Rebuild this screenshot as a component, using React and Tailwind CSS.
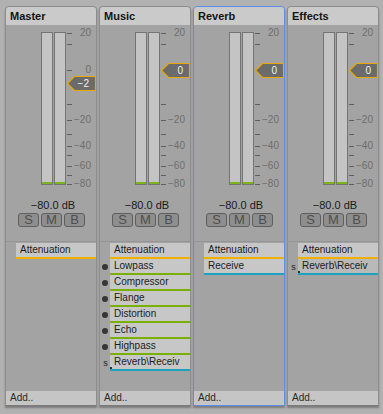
import React from 'react';

const ticks = [
  { t: 'top-[8px]' },
  { t: 'top-[19px]' },
  { t: 'top-[45px]' },
  { t: 'top-[79px]' },
  { t: 'top-[95px]' },
  { t: 'top-[109px]' },
  { t: 'top-[121px]' },
  { t: 'top-[130px]' },
  { t: 'top-[141px]' },
  { t: 'top-[150px]' },
  { t: 'top-[159px]' },
];

const labels = [
  { text: '20', t: 'top-[2px]' },
  { text: '0', t: 'top-[39px]', zero: true },
  { text: '\u221220', t: 'top-[89px]' },
  { text: '\u221240', t: 'top-[115px]' },
  { text: '\u221260', t: 'top-[135px]' },
  { text: '\u221280', t: 'top-[153px]' },
];

const lineColor = {
  orange: 'border-[#f0b000]',
  green: 'border-[#7ab000]',
  cyan: 'border-[#1ca3bf]',
};

function Meter({ left }) {
  return (
    <div className={`absolute ${left} top-[7px] w-[12px] h-[153px] border border-[#747474] bg-[#c4c4c4] flex flex-col justify-end`}>
      <div className="h-[2px] bg-[#7cb41c]" />
    </div>
  );
}

function Marker({ text, top }) {
  return (
    <div className={`absolute left-[61px] ${top} w-[30px] h-[15px]`}>
      <svg width="30" height="15" viewBox="0 0 30 15" className="absolute inset-0 overflow-visible">
        <polygon points="0.5,7.5 7.5,0.5 28.5,0.5 28.5,14.5 7.5,14.5" fill="#6b6b6b" stroke="#e8a800" strokeWidth="1.2" />
      </svg>
      <span className="absolute right-[8px] top-0 text-[10px] leading-[15px] text-[#f2f2f2]">{text}</span>
    </div>
  );
}

function Row({ row }) {
  return (
    <div className="flex h-[16px]">
      <div className="w-[10px] flex items-center justify-center">
        {row.dot && <div className="w-[6px] h-[6px] rounded-full bg-[#363636]" />}
        {row.send && <span className="text-[9px] leading-[14px] text-[#222] pl-[1px]">s</span>}
      </div>
      <div className={`relative flex-1 ${row.send && row.dark ? 'bg-[#b9b9b9]' : 'bg-[#c7c7c7]'} border-b-2 ${lineColor[row.color]} text-[10px] leading-[14px] text-[#1c1c1c] pl-[4px] whitespace-nowrap overflow-hidden`}>
        {row.name}
        {row.send && <div className="absolute left-0 bottom-[-2px] w-[2px] h-[4px] bg-[#0d3c48]" />}
      </div>
    </div>
  );
}

function Panel({ name, selected, marker, markerTop, hideZero, rows }) {
  return (
    <div
      className={`w-[92px] h-[400px] shrink-0 flex flex-col rounded-t-[4px] overflow-hidden bg-[#a3a3a3] border shadow-[0_2px_2px_rgba(0,0,0,0.3)] ${
        selected ? 'border-[#5b8ee8]' : 'border-[#8d8d8d] border-b-[#7a7a7a]'
      }`}
    >
      <div className="h-[18px] bg-[#cacaca] text-[11px] font-bold leading-[18px] text-[#141414] pl-[4px]">{name}</div>
      <div className="relative h-[161px]">
        <Meter left="left-[35px]" />
        <Meter left="left-[48px]" />
        {ticks.map((k, i) => (
          <div key={i} className={`absolute left-[61px] ${k.t} w-[5px] h-[1px] bg-[#5f5f5f]`} />
        ))}
        {labels.map((l, i) =>
          l.zero && hideZero ? null : (
            <div key={i} className={`absolute right-[5px] ${l.t} text-[10px] leading-[12px] text-[#6e6e6e]`}>
              {l.text}
            </div>
          )
        )}
        <Marker text={marker} top={markerTop} />
      </div>
      <div className="h-[12px]" />
      <div className="h-[14px] text-[11px] leading-[14px] text-[#1a1a1a] text-center pl-[4px]">{'\u221280.0 dB'}</div>
      <div className="h-[1px]" />
      <div className="h-[14px] flex justify-center gap-[2px] pl-[1px]">
        {['S', 'M', 'B'].map((b) => (
          <div
            key={b}
            className="w-[21px] h-[14px] rounded-[3px] border border-[#5e5e5e] bg-[#8e8e8e] text-[13px] leading-[12px] text-[#4e4e4e] flex items-center justify-center"
          >
            {b}
          </div>
        ))}
      </div>
      <div className="h-[14px]" />
      <div className="h-[1px] bg-[#959595]" />
      <div className="flex-1 pt-[1px] flex flex-col">
        {rows.map((r, i) => (
          <Row key={i} row={r} />
        ))}
      </div>
      <div className="h-[14px] bg-[#c5c5c5] text-[10px] leading-[14px] text-[#2a2a2a] pl-[4px]">Add..</div>
    </div>
  );
}

export default function App() {
  return (
    <div
      className="w-[383px] h-[414px] bg-[#b1b1b1] flex gap-[2px] pl-[5px] pt-[6px] overflow-hidden"
      style={{ fontFamily: '"Liberation Sans", Arial, sans-serif' }}
    >
      <Panel
        name="Master"
        marker={'\u22122'}
        markerTop="top-[51px]"
        rows={[{ name: 'Attenuation', color: 'orange' }]}
      />
      <Panel
        name="Music"
        marker="0"
        markerTop="top-[38px]"
        hideZero
        rows={[
          { name: 'Attenuation', color: 'orange' },
          { name: 'Lowpass', color: 'green', dot: true },
          { name: 'Compressor', color: 'green', dot: true },
          { name: 'Flange', color: 'green', dot: true },
          { name: 'Distortion', color: 'green', dot: true },
          { name: 'Echo', color: 'green', dot: true },
          { name: 'Highpass', color: 'green', dot: true },
          { name: 'Reverb\\Receiv', color: 'cyan', send: true },
        ]}
      />
      <Panel
        name="Reverb"
        selected
        marker="0"
        markerTop="top-[38px]"
        hideZero
        rows={[
          { name: 'Attenuation', color: 'orange' },
          { name: 'Receive', color: 'cyan' },
        ]}
      />
      <Panel
        name="Effects"
        marker="0"
        markerTop="top-[38px]"
        hideZero
        rows={[
          { name: 'Attenuation', color: 'orange' },
          { name: 'Reverb\\Receiv', color: 'cyan', send: true, dark: true },
        ]}
      />
    </div>
  );
}
